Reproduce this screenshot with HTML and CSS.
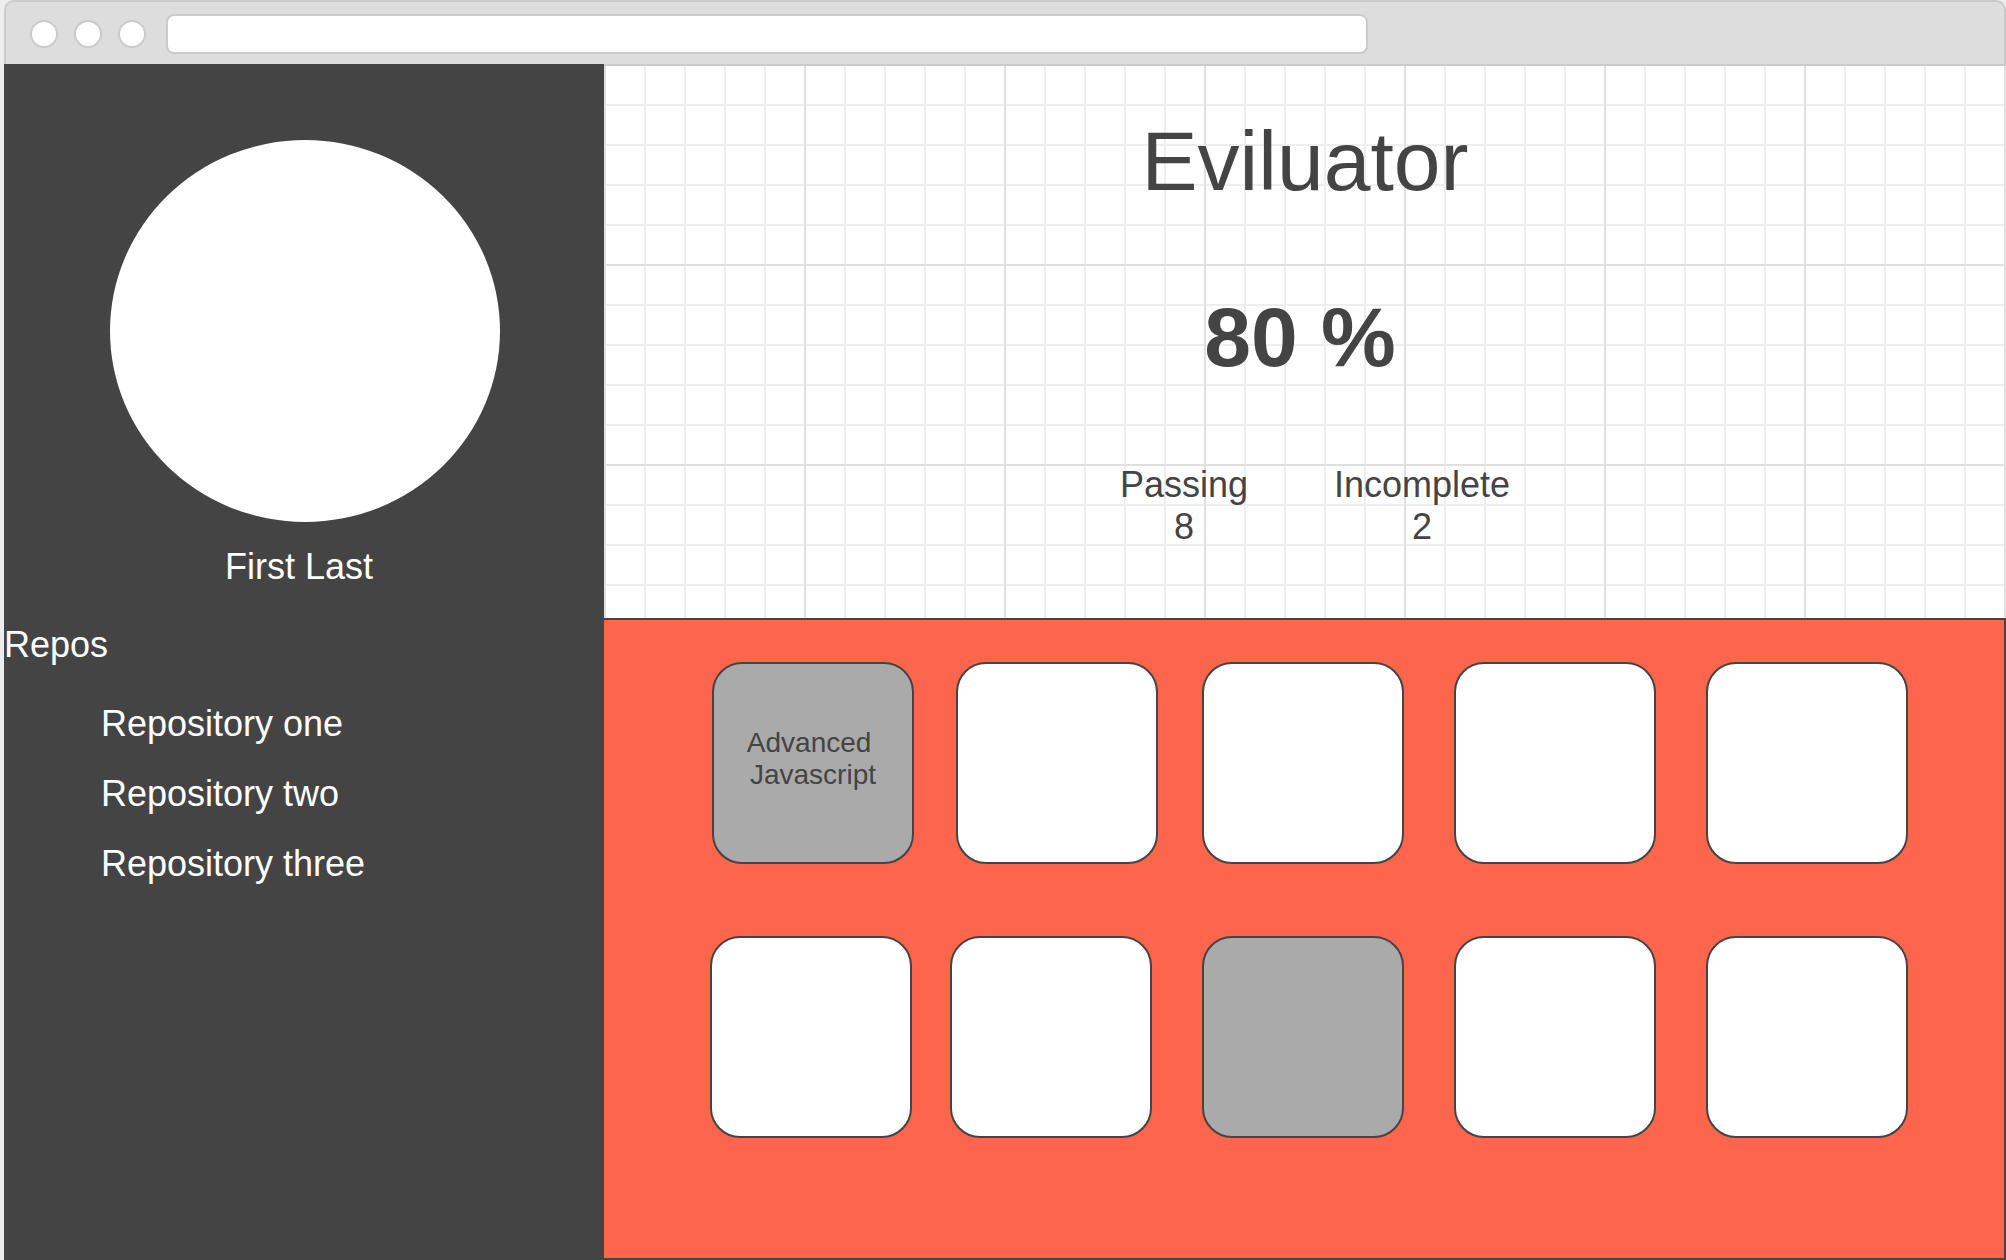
FILE: index.html
```html
<!DOCTYPE html>
<html lang="en">
<head>
  <meta charset="utf-8">
  <title>Eviluator</title>
  <link rel="stylesheet" href="styles.css">
</head>
<body>
  <header class="toolbar">
    <div class="dots">
      <span class="dot"></span>
      <span class="dot"></span>
      <span class="dot"></span>
    </div>
    <input class="address" type="text" aria-label="Address">
  </header>
  <div class="page">
    <aside class="sidebar">
      <div class="avatar"></div>
      <p class="name">First Last</p>
      <h2 class="repos-title">Repos</h2>
      <ul class="repos">
        <li><a href="#one">Repository one</a></li>
        <li><a href="#two">Repository two</a></li>
        <li><a href="#three">Repository three</a></li>
      </ul>
    </aside>
    <main class="main">
      <section class="summary">
        <h1 class="title">Eviluator</h1>
        <p class="score">80 %</p>
        <dl class="stats">
          <div class="stat">
            <dt>Passing</dt>
            <dd>8</dd>
          </div>
          <div class="stat">
            <dt>Incomplete</dt>
            <dd>2</dd>
          </div>
        </dl>
      </section>
      <section class="panel">
        <div class="row row-first">
          <div class="card card-muted"><span class="card-label">Advanced 
Javascript</span></div>
          <div class="card"></div>
          <div class="card"></div>
          <div class="card"></div>
          <div class="card"></div>
        </div>
        <div class="row row-second">
          <div class="card"></div>
          <div class="card"></div>
          <div class="card card-muted"></div>
          <div class="card"></div>
          <div class="card"></div>
        </div>
      </section>
    </main>
  </div>
</body>
</html>
```

FILE: styles.css
```css
* {
  box-sizing: border-box;
}

body {
  display: flex;
  flex-direction: column;
  min-height: 100vh;
  margin: 0;
  padding-left: 4px;
  background: #ededee;
  color: #444;
  font-family: "Liberation Sans", Arial, sans-serif;
  font-size: 36px;
  line-height: 42px;
}

h1, h2, p, ul, dl, dd {
  margin: 0;
  padding: 0;
  font-weight: normal;
}

/* Browser bar */
.toolbar {
  display: flex;
  align-items: center;
  gap: 20px;
  padding: 12px 24px 10px;
  background: #ddd;
  border: 2px solid #cbcbcb;
  border-bottom: 0;
  border-radius: 10px 10px 0 0;
}

.dots {
  display: flex;
  gap: 16px;
}

.dot {
  width: 28px;
  height: 28px;
  background: #fff;
  border: 2px solid #cbcbcb;
  border-radius: 50%;
}

.address {
  width: 1202px;
  height: 40px;
  padding: 0 12px;
  background: #fff;
  border: 2px solid #cbcbcb;
  border-radius: 8px;
  font: inherit;
  font-size: 28px;
}

.page {
  display: flex;
  flex: 1;
}

/* Sidebar */
.sidebar {
  flex: none;
  width: 600px;
  padding-top: 76px;
  background: #444;
  color: #fff;
}

.avatar {
  width: 390px;
  aspect-ratio: 390 / 382;
  margin: 0 104px 0 106px;
  background: #fff;
  border-radius: 50%;
}

.name {
  padding: 24px 10px 36px 0;
  text-align: center;
}

.repos-title {
  font-size: 36px;
}

.repos {
  display: flex;
  flex-direction: column;
  gap: 28px;
  padding: 37px 0 0 97px;
  list-style: none;
}

.repos a {
  color: inherit;
  text-decoration: none;
}

/* Summary on squared paper */
.main {
  display: flex;
  flex: 1;
  flex-direction: column;
}

.summary {
  padding: 47px 0 70px;
  border-top: 2px solid #cbcbcb;
  background-color: #fff;
  background-image:
    linear-gradient(to right, #e0e0e0 2px, transparent 2px),
    linear-gradient(to bottom, #e0e0e0 2px, transparent 2px),
    linear-gradient(to right, #eee 2px, transparent 2px),
    linear-gradient(to bottom, #eee 2px, transparent 2px);
  background-origin: border-box;
  background-size: 200px 200px, 200px 200px, 40px 40px, 40px 40px;
  text-align: center;
}

.title,
.score {
  font-size: 84px;
  line-height: 96px;
}

.score {
  padding: 80px 10px 79px 0;
  font-weight: bold;
}

.stats {
  display: flex;
  justify-content: center;
  gap: 86px;
  padding-left: 20px;
}

/* Cards */
.panel {
  display: flex;
  flex: 1;
  flex-direction: column;
  gap: 72px;
  padding: 42px 96px 120px 0;
  background: #fe654d;
  border: 2px solid #444;
  border-left: 0;
}

.row {
  display: grid;
}

.row-first {
  grid-template-columns: 244fr 246fr 252fr 252fr 202px;
  padding-left: 108px;
}

.row-second {
  grid-template-columns: 240fr 252fr 252fr 252fr 202px;
  padding-left: 106px;
}

.card {
  display: flex;
  align-items: center;
  justify-content: center;
  width: 202px;
  height: 202px;
  background: #fff;
  border: 2px solid #444;
  border-radius: 30px;
}

.card-muted {
  background: #aaa;
}

.card-label {
  padding-bottom: 8px;
  font-size: 28px;
  line-height: 32px;
  text-align: center;
  white-space: pre;
}
```
